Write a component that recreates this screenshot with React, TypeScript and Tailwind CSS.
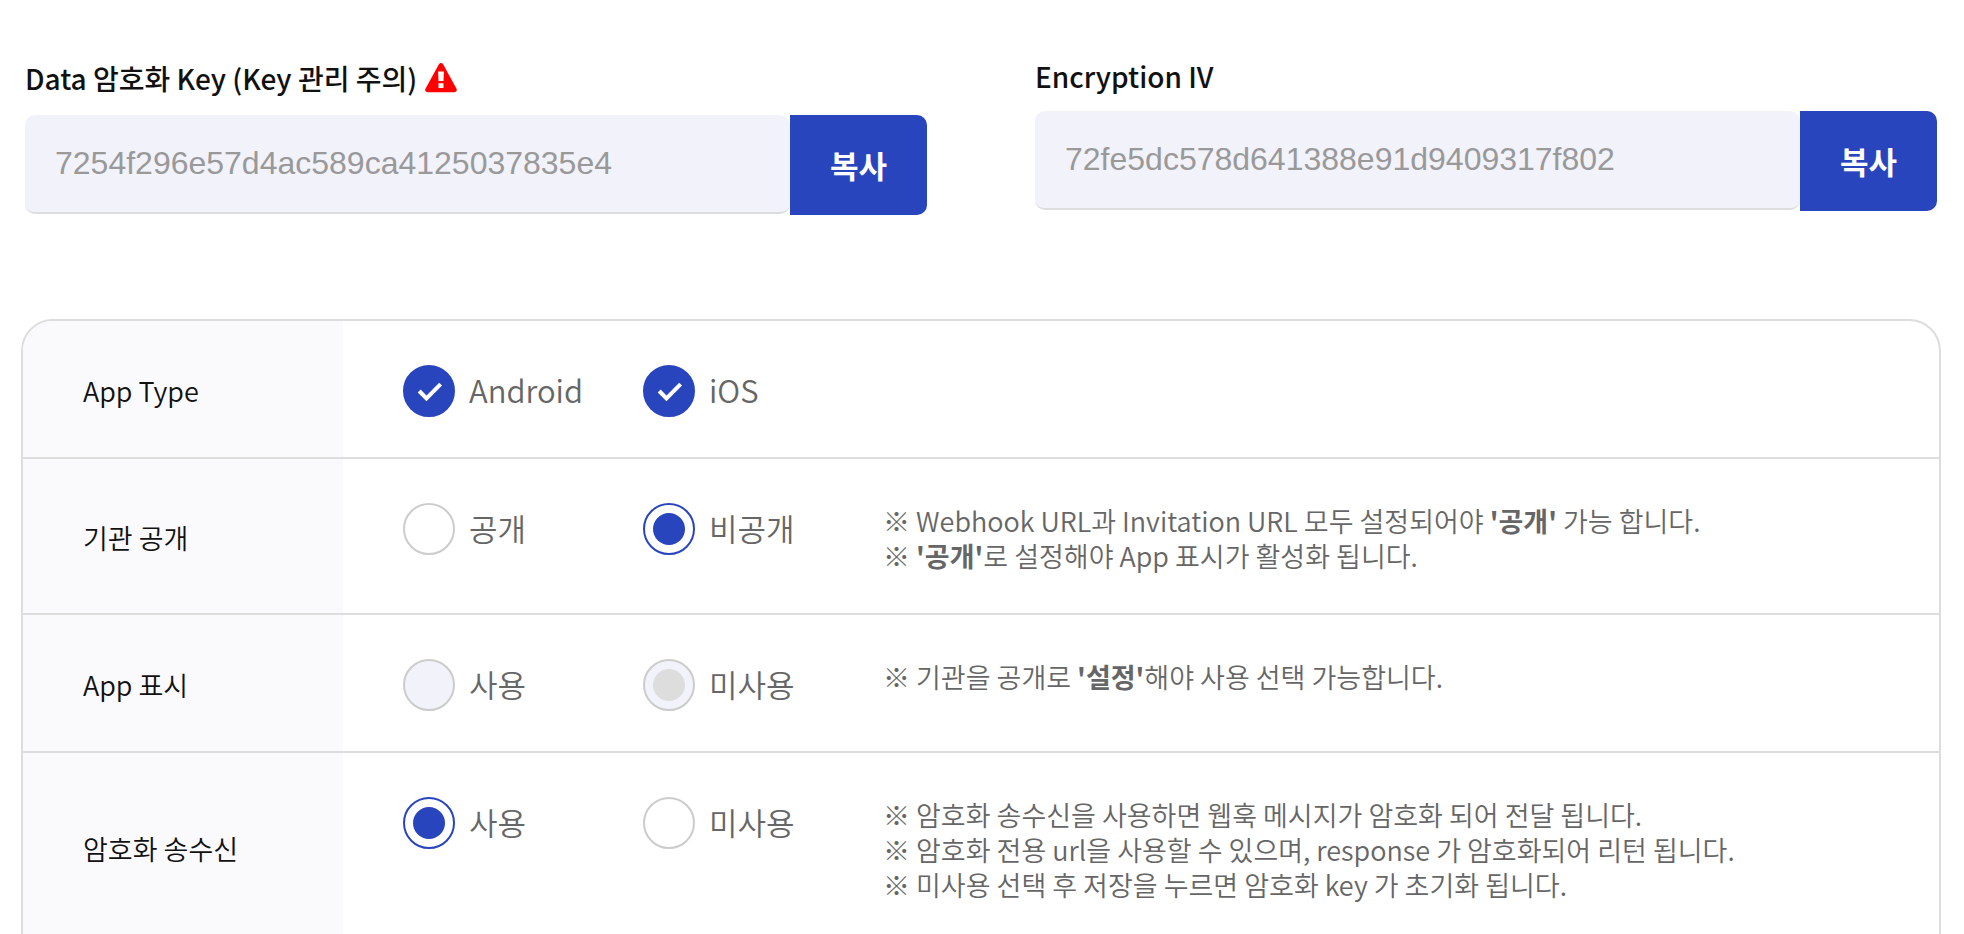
import { useState } from "react";
import type { ReactNode } from "react";

function WarningIcon() {
  return (
    <svg viewBox="0 0 32 30" className="ml-2 h-[30px] w-8 shrink-0" role="img" aria-label="주의">
      <path
        fill="#ff0000"
        fillRule="evenodd"
        d="M13.9 1.2a2.4 2.4 0 0 1 4.2 0l13.4 24.6a2.3 2.3 0 0 1-2 3.4H2.5a2.3 2.3 0 0 1-2-3.4ZM13.1 8.6l.4 9.4h5l.4-9.4ZM13.5 20.200v4.800h5v-4.800Z"
      />
    </svg>
  );
}

type CopyFieldProps = { id: string; label: string; value: string; warning?: boolean };

function CopyField({ id, label, value, warning = false }: CopyFieldProps) {
  return (
    <div className="min-w-0 flex-1">
      <div className={warning ? "mb-[19px] flex h-9 items-center" : "mb-[19px] flex h-8 items-center"}>
        <label htmlFor={id} className="text-[28px] leading-8 font-medium text-[#111111]">
          {label}
        </label>
        {warning && <WarningIcon />}
      </div>
      <div className="flex items-start">
        <input
          id={id}
          type="text"
          readOnly
          value={value}
          className="h-[99px] min-w-0 flex-1 rounded-[10px] border-b-2 border-[#dddddd] bg-[#f2f2fb] px-[30px] font-['Liberation_Sans',Arial,sans-serif] text-[32px] text-[#999999] outline-none"
        />
        <button
          type="button"
          onClick={() => navigator.clipboard?.writeText(value)}
          className="h-[100px] w-[137px] shrink-0 rounded-r-[10px] bg-[#2945bd] text-[31px] font-bold text-white"
        >
          복사
        </button>
      </div>
    </div>
  );
}

type OptionProps = {
  label: string;
  checked: boolean;
  onChange: () => void;
  name?: string;
  disabled?: boolean;
};

function CheckOption({ label, checked, onChange }: OptionProps) {
  return (
    <label className="flex w-60 shrink-0 items-start gap-[14px]">
      <span className="grid size-[52px] shrink-0">
        <input
          type="checkbox"
          checked={checked}
          onChange={onChange}
          className="col-start-1 row-start-1 size-[52px] appearance-none rounded-full border-2 border-[#cccccc] bg-white checked:border-[#2945bd] checked:bg-[#2945bd]"
        />
        <svg
          viewBox="0 0 52 52"
          className="pointer-events-none col-start-1 row-start-1 size-[52px]"
          fill="none"
          stroke="#ffffff"
          strokeWidth="4"
          aria-hidden="true"
        >
          <path d="M16.2 26l7.300 7.500L37.600 19.200" />
        </svg>
      </span>
      <span className="text-[31px] leading-[50px]">{label}</span>
    </label>
  );
}

function RadioOption({ label, checked, onChange, name, disabled = false }: OptionProps) {
  return (
    <label className="flex w-60 shrink-0 items-start gap-[14px]">
      <input
        type="radio"
        name={name}
        checked={checked}
        disabled={disabled}
        onChange={onChange}
        className="grid size-[52px] shrink-0 appearance-none place-content-center rounded-full border-2 border-[#cccccc] bg-white before:size-8 before:rounded-full before:content-[''] enabled:checked:border-[#2945bd] enabled:checked:before:bg-[#2945bd] disabled:bg-[#f2f2fb] disabled:checked:before:bg-[#dddddd]"
      />
      <span className="text-[31px] leading-[50px]">{label}</span>
    </label>
  );
}

function Row({ id, title, children, notes }: { id: string; title: string; children: ReactNode; notes?: ReactNode }) {
  return (
    <div role="group" aria-labelledby={id} className="flex">
      <div className="flex w-80 shrink-0 items-center bg-[#fafafd] px-[60px] pt-0.5">
        <h2 id={id} className="text-[27px] leading-[35px] text-[#111111]">
          {title}
        </h2>
      </div>
      <div className="flex min-w-0 flex-1 items-start px-[60px] pt-11 pb-10">
        {children}
        {notes && <div className="text-[27px] leading-[35px]">{notes}</div>}
      </div>
    </div>
  );
}

export default function App() {
  const [os, setOs] = useState({ android: true, ios: true });
  const [open, setOpen] = useState(false);
  const [encrypted, setEncrypted] = useState(true);

  return (
    <main className="min-h-screen bg-white pt-[60px] font-['Noto_Sans_CJK_KR',sans-serif] font-[350] text-[#666666]">
      <div className="flex items-start gap-[108px] pr-[27px] pl-[25px]">
        <CopyField
          id="data-key"
          label="Data 암호화 Key (Key 관리 주의)"
          value="7254f296e57d4ac589ca4125037835e4"
          warning
        />
        <CopyField id="encryption-iv" label="Encryption IV" value="72fe5dc578d641388e91d9409317f802" />
      </div>

      <section className="mt-[104px] mr-[23px] ml-[21px] divide-y-2 divide-[#dddddd] overflow-hidden rounded-t-[32px] border-2 border-[#dddddd]">
        <Row id="app-type" title="App Type">
          <CheckOption
            label="Android"
            checked={os.android}
            onChange={() => setOs({ ...os, android: !os.android })}
          />
          <CheckOption label="iOS" checked={os.ios} onChange={() => setOs({ ...os, ios: !os.ios })} />
        </Row>
        <Row
          id="visibility"
          title="기관 공개"
          notes={
            <>
              <p>
                ※ Webhook URL과 Invitation URL 모두 설정되어야 <b className="font-bold">'공개'</b> 가능 합니다.
              </p>
              <p>
                ※ <b className="font-bold">'공개'</b>로 설정해야 App 표시가 활성화 됩니다.
              </p>
            </>
          }
        >
          <RadioOption name="visibility" label="공개" checked={open} onChange={() => setOpen(true)} />
          <RadioOption name="visibility" label="비공개" checked={!open} onChange={() => setOpen(false)} />
        </Row>
        <Row
          id="app-display"
          title="App 표시"
          notes={
            <p>
              ※ 기관을 공개로 <b className="font-bold">'설정'</b>해야 사용 선택 가능합니다.
            </p>
          }
        >
          <RadioOption name="app-display" label="사용" checked={false} disabled onChange={() => {}} />
          <RadioOption name="app-display" label="미사용" checked disabled onChange={() => {}} />
        </Row>
        <Row
          id="encryption"
          title="암호화 송수신"
          notes={
            <>
              <p>※ 암호화 송수신을 사용하면 웹훅 메시지가 암호화 되어 전달 됩니다.</p>
              <p>※ 암호화 전용 url을 사용할 수 있으며, response 가 암호화되어 리턴 됩니다.</p>
              <p>※ 미사용 선택 후 저장을 누르면 암호화 key 가 초기화 됩니다.</p>
            </>
          }
        >
          <RadioOption name="encryption" label="사용" checked={encrypted} onChange={() => setEncrypted(true)} />
          <RadioOption name="encryption" label="미사용" checked={!encrypted} onChange={() => setEncrypted(false)} />
        </Row>
      </section>
    </main>
  );
}
